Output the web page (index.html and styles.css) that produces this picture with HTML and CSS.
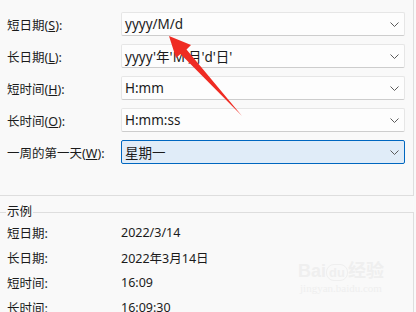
FILE: index.html
```html
<!DOCTYPE html>
<html lang="zh-CN">
<head>
    <meta charset="UTF-8">
    <title>日期和时间格式</title>
    <link rel="stylesheet" href="styles.css">
</head>
<body>
    <div class="page">
        <div class="group formats">
            <div class="cut-title"><span>日期和时间格式</span></div>

            <div class="row">
                <label>短日期(<u>S</u>):</label>
                <div class="combo"><span>yyyy/M/d</span><svg class="chev" viewBox="0 0 9 5"><polyline points="0.5,0.5 4.5,4.5 8.5,0.5"/></svg></div>
            </div>
            <div class="row">
                <label>长日期(<u>L</u>):</label>
                <div class="combo"><span>yyyy'年'M'月'd'日'</span><svg class="chev" viewBox="0 0 9 5"><polyline points="0.5,0.5 4.5,4.5 8.5,0.5"/></svg></div>
            </div>
            <div class="row">
                <label>短时间(<u>H</u>):</label>
                <div class="combo"><span>H:mm</span><svg class="chev" viewBox="0 0 9 5"><polyline points="0.5,0.5 4.5,4.5 8.5,0.5"/></svg></div>
            </div>
            <div class="row">
                <label>长时间(<u>O</u>):</label>
                <div class="combo"><span>H:mm:ss</span><svg class="chev" viewBox="0 0 9 5"><polyline points="0.5,0.5 4.5,4.5 8.5,0.5"/></svg></div>
            </div>
            <div class="row">
                <label>一周的第一天(<u>W</u>):</label>
                <div class="combo focused"><span>星期一</span><svg class="chev" viewBox="0 0 9 5"><polyline points="0.5,0.5 4.5,4.5 8.5,0.5"/></svg></div>
            </div>
        </div>

        <div class="group sample">
            <div class="legend"><span>示例</span></div>
            <div class="srow"><span class="slabel">短日期:</span><span>2022/3/14</span></div>
            <div class="srow"><span class="slabel">长日期:</span><span>2022年3月14日</span></div>
            <div class="srow"><span class="slabel">短时间:</span><span>16:09</span></div>
            <div class="srow"><span class="slabel">长时间:</span><span>16:09:30</span></div>
        </div>

        <div class="watermark">
            <div class="wm-logo">Bai<b>du</b>经验</div>
            <div class="wm-url">jingyan.baidu.com</div>
        </div>

        <svg class="arrow" width="416" height="312" viewBox="0 0 416 312">
            <polygon points="169,36 191,45 186.5,49.5 242,116 180.5,54 176,58"/>
        </svg>
    </div>
</body>
</html>
```

FILE: styles.css
```css
body {
    margin: 0;
    background-color: #f9f9f9;
    color: #1b1b1b;
    font-family: "Noto Sans", "Noto Sans CJK SC", sans-serif;
    font-size: 12.5px;
}
.page {
    position: relative;
    width: 416px;
    height: 312px;
    overflow: hidden;
}
.group {
    width: 413px;
    border-right: 1px solid #dedede;
}
.formats {
    height: 195px;
    border-bottom: 1px solid #dedede;
}
.cut-title {
    height: 12px;
    overflow: hidden;
    padding-left: 7px;
    color: #333;
}
.cut-title span {
    display: block;
    margin-top: -14px;
    line-height: 16px;
}
.row {
    display: flex;
    align-items: center;
    height: 24px;
    margin-bottom: 8px;
    padding-left: 7px;
}
.row label {
    width: 114px;
}
.combo {
    display: flex;
    align-items: center;
    justify-content: space-between;
    box-sizing: border-box;
    width: 284px;
    height: 24px;
    padding: 0 5px 0 3px;
    background-color: #fdfdfd;
    border: 1px solid #e6e6e6;
    border-bottom-color: #cdcdcd;
    border-radius: 2px;
    font-size: 13.5px;
}
.combo.focused {
    background-color: #e0ecf8;
    border-color: #0067c0;
}
.chev {
    width: 9px;
    height: 5px;
    fill: none;
    stroke: #5a5a5a;
    stroke-width: 1;
}
.sample {
    height: 110px;
    margin-top: 16px;
    border-top: 1px solid #dedede;
}
.legend {
    height: 16px;
    margin-top: -9px;
    padding-left: 6px;
    line-height: 16px;
}
.legend span {
    background-color: #f9f9f9;
    padding: 0 1px;
}
.srow {
    display: flex;
    height: 25px;
    align-items: center;
    padding-left: 7px;
}
.slabel {
    width: 114px;
}
.watermark {
    position: absolute;
    left: 298px;
    top: 256px;
    color: #efefef;
    text-align: center;
}
.wm-logo {
    font-family: "Liberation Sans", "Noto Sans CJK SC", sans-serif;
    font-size: 18px;
    font-weight: bold;
}
.wm-logo b {
    display: inline-block;
    padding: 0 2px;
    border-radius: 8px;
    border: 1px solid #efefef;
    font-size: 13px;
}
.wm-url {
    font-family: "Liberation Serif", serif;
    font-size: 11px;
}
.arrow {
    position: absolute;
    left: 0;
    top: 0;
    fill: #ef2b22;
}
```
